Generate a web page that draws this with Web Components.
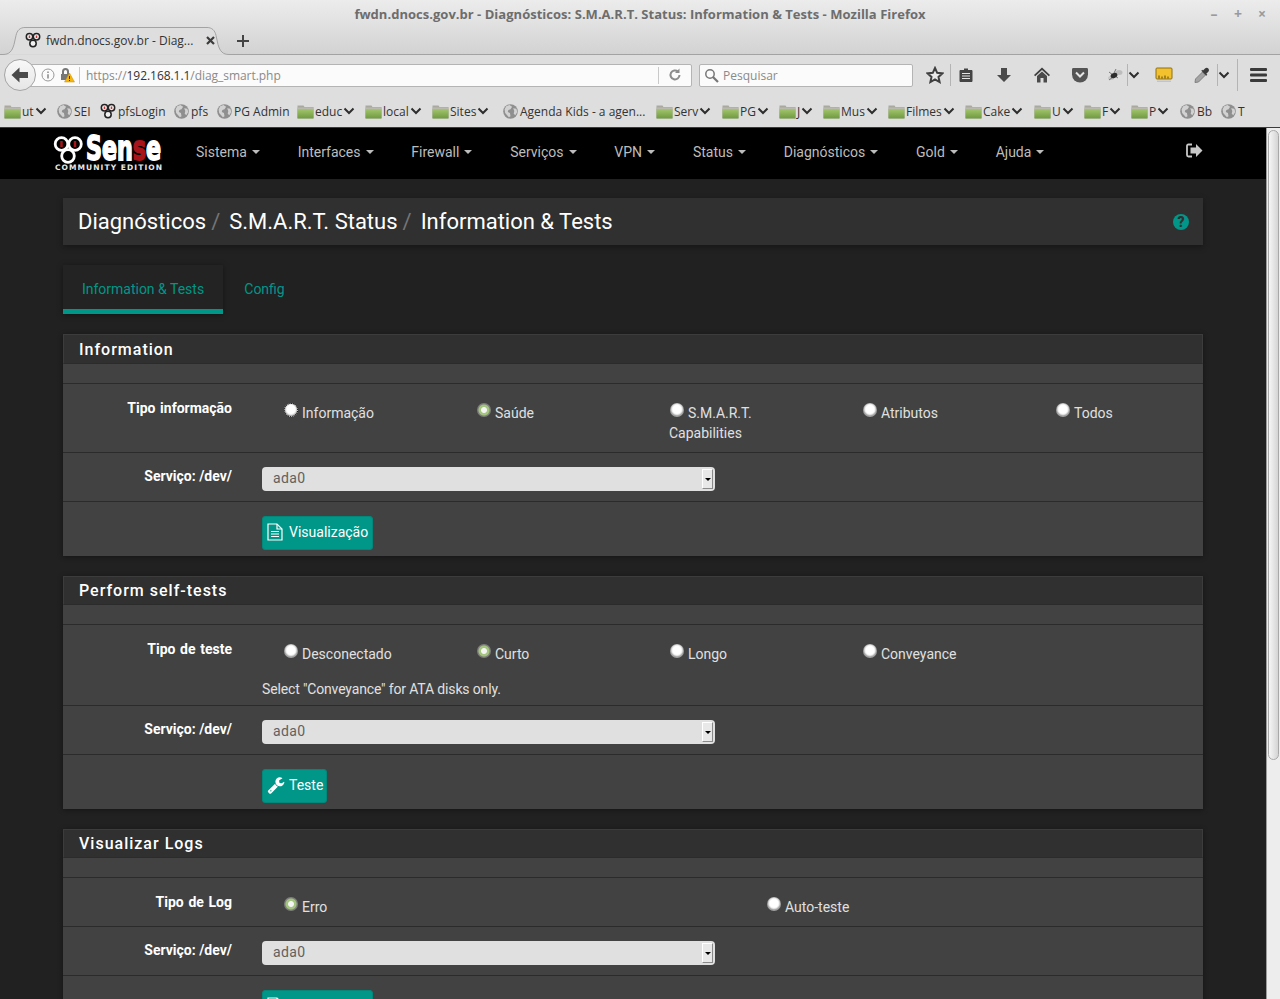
<!DOCTYPE html>
<html>
<head>
<meta charset="utf-8">
<title>pfSense</title>
<style>
  html, body { margin: 0; padding: 0; height: 999px; overflow: hidden; background: #dedede; }
  body { font-family: "Roboto", "Liberation Sans", sans-serif; font-size: 14px; }
</style>
</head>
<body>
<browser-chrome></browser-chrome>
<page-view>
  <pf-navbar>
    <pf-navitem>Sistema</pf-navitem>
    <pf-navitem>Interfaces</pf-navitem>
    <pf-navitem>Firewall</pf-navitem>
    <pf-navitem>Serviços</pf-navitem>
    <pf-navitem>VPN</pf-navitem>
    <pf-navitem>Status</pf-navitem>
    <pf-navitem>Diagnósticos</pf-navitem>
    <pf-navitem>Gold</pf-navitem>
    <pf-navitem>Ajuda</pf-navitem>
  </pf-navbar>
  <pf-breadcrumb></pf-breadcrumb>
  <pf-tabs></pf-tabs>

  <pf-panel heading="Information" hh="30">
    <pf-row label="Tipo informação" h="69">
      <pf-radio w="193" focus>Informação</pf-radio>
      <pf-radio w="193" checked>Saúde</pf-radio>
      <pf-radio w="193">S.M.A.R.T. Capabilities</pf-radio>
      <pf-radio w="193">Atributos</pf-radio>
      <pf-radio w="193">Todos</pf-radio>
    </pf-row>
    <pf-row label="Serviço: /dev/" h="49" compact><pf-select>ada0</pf-select></pf-row>
    <pf-row h="54" last><pf-button icon="file">Visualização</pf-button></pf-row>
  </pf-panel>

  <pf-panel heading="Perform self-tests" hh="29">
    <pf-row label="Tipo de teste" h="81">
      <pf-radio w="193">Desconectado</pf-radio>
      <pf-radio w="193" checked>Curto</pf-radio>
      <pf-radio w="193">Longo</pf-radio>
      <pf-radio w="193">Conveyance</pf-radio>
      <span slot="help">Select "Conveyance" for ATA disks only.</span>
    </pf-row>
    <pf-row label="Serviço: /dev/" h="49" compact><pf-select>ada0</pf-select></pf-row>
    <pf-row h="54" last><pf-button icon="wrench">Teste</pf-button></pf-row>
  </pf-panel>

  <pf-panel heading="Visualizar Logs" hh="29">
    <pf-row label="Tipo de Log" h="49">
      <pf-radio w="483" checked>Erro</pf-radio>
      <pf-radio w="483">Auto-teste</pf-radio>
    </pf-row>
    <pf-row label="Serviço: /dev/" h="49" compact><pf-select>ada0</pf-select></pf-row>
    <pf-row h="54" last><pf-button icon="file">Visualização</pf-button></pf-row>
  </pf-panel>
</page-view>

<script>
const CHROME_FONT = '"Open Sans", "Noto Sans", sans-serif';

const folderIcon = `<svg width="17" height="15" viewBox="0 0 17 15"><path d="M0.5 1.5h6l1 1.5h9v11h-16z" fill="#a9a99f"/><path d="M0.5 3.5h16v11h-16z" fill="#b9b9ae"/><rect x="0.5" y="5" width="16" height="9.5" fill="url(#fg)"/><defs><linearGradient id="fg" x1="0" y1="0" x2="0" y2="1"><stop offset="0" stop-color="#a3c56e"/><stop offset="1" stop-color="#6f9a40"/></linearGradient></defs></svg>`;
const globeIcon = `<svg width="15" height="15" viewBox="0 0 14 14"><circle cx="7" cy="7" r="6.8" fill="#8f8f8f"/><path d="M3 2l3-1 2.500 1.500-1.500 2.500-2 .5-.5 2 2 1 .5 3-1.500 .8-3.500-3.800-.5-3.500zM9.500 4l3 .5.800 3-1.800 3-1.500-1.500.5-2.500z" fill="#d2d2d2"/></svg>`;
const pfIcon = `<svg width="16" height="16" viewBox="0 0 16 16" fill="none" stroke="#222" stroke-width="1.500"><circle cx="4.500" cy="4.800" r="3.200" fill="#f2f2f2"/><circle cx="11.500" cy="4.800" r="3.200" fill="#f2f2f2"/><circle cx="8" cy="11.500" r="3.200" fill="#f2f2f2"/><path d="M4.500 3.500v2.500" stroke="#c33"/><path d="M11.500 3.500v2.500" stroke="#c33"/></svg>`;
const chevron = `<svg width="12" height="8" viewBox="0 0 12 8" fill="none" stroke="#2e2e2e" stroke-width="2"><path d="M1.500 1.500l4.500 4.500 4.500-4.500"/></svg>`;

class BookmarkItem extends HTMLElement {
  connectedCallback() {
    const kind = this.getAttribute('kind');
    const icon = kind === 'folder' ? folderIcon : kind === 'pf' ? pfIcon : globeIcon;
    const root = this.attachShadow({ mode: 'open' });
    root.innerHTML = `
      <style>
        :host { display: flex; align-items: center; flex: none; width: ${this.getAttribute('w')}px; white-space: nowrap; }
        .i { display: flex; flex: none; margin-right: ${kind === 'folder' ? 1 : 2}px; }
        .c { display: flex; margin-left: 1px; }
      </style>
      <span class="i">${icon}</span><slot></slot>${kind === 'folder' ? `<span class="c">${chevron}</span>` : ''}`;
  }
}
customElements.define('bookmark-item', BookmarkItem);

const BOOKMARKS = [
  ['folder', 'ut', 53], ['globe', 'SEI', 43], ['pf', 'pfsLogin', 74], ['globe', 'pfs', 43], ['globe', 'PG Admin', 80],
  ['folder', 'educ', 68], ['folder', 'local', 67], ['folder', 'Sites', 71], ['globe', 'Agenda Kids - a agen...', 153],
  ['folder', 'Serv', 66], ['folder', 'PG', 57], ['folder', 'J', 44], ['folder', 'Mus', 65], ['folder', 'Filmes', 77],
  ['folder', 'Cake', 69], ['folder', 'U', 50], ['folder', 'F', 47], ['folder', 'P', 49], ['globe', 'Bb', 41], ['globe', 'T', 30],
];

class BrowserChrome extends HTMLElement {
  constructor() {
    super();
    const root = this.attachShadow({ mode: 'open' });
    const items = BOOKMARKS.map(([k, t, w]) => `<bookmark-item kind="${k}" w="${w}">${t}</bookmark-item>`).join('');
    root.innerHTML = `
      <style>
        :host { display: block; height: 128px; font-family: ${CHROME_FONT}; font-size: 12px; color: #3a3a3a; box-sizing: border-box; border-bottom: 1px solid #3c3c3c; background: #dedede; }
        .title { height: 27px; display: flex; align-items: center; justify-content: center; position: relative; font-weight: 700; color: #6d6d6d; font-size: 13px; letter-spacing: .02px; }
        .winbtns { position: absolute; right: 6px; top: 6px; display: flex; color: #9a9a9a; font-size: 14px; line-height: 16px; font-weight: 700; }
        .winbtns span { width: 24px; text-align: center; }
        .top { background: linear-gradient(#ececec, #d2d2d2); height: 55px; }
        .tabs { height: 28px; position: relative; display: flex; }
        .tab { position: relative; width: 232px; height: 28px; flex: none; display: flex; align-items: center; padding: 0 0 2px 25px; box-sizing: border-box; }
        .tab svg.shape { position: absolute; left: 0; top: 0; }
        .tab span { position: relative; display: flex; }
        .tab .tabtext { margin-left: 5px; color: #333; width: 160px; white-space: nowrap; }
        .plus { margin-left: 4px; display: flex; align-items: center; }
        .rule { position: absolute; left: 232px; right: 0; bottom: 0; height: 1px; background: #a3a3a3; }
        .nav { height: 40px; display: flex; align-items: center; position: relative; padding-left: 20px; }
        .back { position: absolute; left: 4px; top: 4px; width: 32px; height: 32px; border-radius: 50%; background: linear-gradient(#f8f8f8, #e6e6e6); border: 1px solid #a5a5a5; box-sizing: border-box; display: flex; align-items: center; justify-content: center; z-index: 1; }
        .url { width: 672px; height: 23px; box-sizing: border-box; background: #fbfbfb; border: 1px solid #b4b4b4; border-radius: 2px; display: flex; align-items: center; padding-left: 20px; font-size: 12px; color: #8a8a8a; position: relative; }
        .url b { font-weight: 400; color: #333; }
        .sep { width: 1px; height: 17px; background: #c9c9c9; flex: none; }
        .icons .sep { background: #b4b4b4; }
        .search { width: 214px; height: 23px; box-sizing: border-box; margin-left: 7px; background: #fbfbfb; border: 1px solid #b4b4b4; border-radius: 2px; display: flex; align-items: center; padding-left: 4px; gap: 4px; color: #8a8a8a; }
        .icons { display: flex; align-items: center; margin-left: 13px; }
        .icons > * { flex: none; }
        .marks { height: 32px; display: flex; align-items: center; padding-left: 4px; color: #333; }
      </style>
      <div class="top">
        <div class="title">fwdn.dnocs.gov.br - Diagnósticos: S.M.A.R.T. Status: Information &amp; Tests - Mozilla Firefox
          <div class="winbtns"><span>–</span><span>+</span><span>×</span></div>
        </div>
        <div class="tabs">
          <div class="tab">
            <svg class="shape" width="232" height="28" viewBox="0 0 232 28"><path d="M0 27.500h3c6 0 9-3 11-10l2-9c1-5 4-8 9-8h182c5 0 8 3 9 8l2 9c2 7 5 10 11 10h3" fill="#dedede" stroke="#a3a3a3"/></svg>
            <span>${pfIcon}</span><span class="tabtext">fwdn.dnocs.gov.br - Diag...</span>
            <svg style="position:relative" width="9" height="9" viewBox="0 0 9 9" stroke="#3c3c3c" stroke-width="2.200"><path d="M1 1l7 7M8 1l-7 7"/></svg>
          </div>
          <div class="plus"><svg width="14" height="14" viewBox="0 0 14 14" fill="none" stroke="#444" stroke-width="2"><path d="M7 1v12M1 7h12"/></svg></div>
          <div class="rule"></div>
        </div>
      </div>
      <div class="nav">
        <div class="back"><svg width="18" height="16" viewBox="0 0 18 16"><path d="M8.500 0.500l-8 7.500 8 7.500v-4.500h8.500v-6h-8.500z" fill="#4a4a4a"/></svg></div>
        <div class="url">
          <svg width="14" height="14" viewBox="0 0 14 14" style="flex:none"><circle cx="7" cy="7" r="6" fill="none" stroke="#999"/><path d="M7 3.500v1.500M7 6.200v4.300" stroke="#888" stroke-width="1.500"/></svg>
          <svg width="16" height="16" viewBox="0 0 16 16" style="margin-left:4px;flex:none"><path d="M3 7v-2.500a3.500 3.500 0 0 1 7 0v2.500h1v6h-9v-6zM5 7h3v-2.500a1.500 1.500 0 0 0-3 0z" fill="#777"/><path d="M10.500 6l5 9h-10z" fill="#f5b50f" stroke="#c98f00" stroke-width=".5"/><path d="M10.500 9v3M10.500 13v1" stroke="#333"/></svg>
          <span class="sep" style="margin:0 6px 0 4px"></span>
          <span style="width:572px;white-space:nowrap;flex:none;letter-spacing:-.05px">https://<b>192.168.1.1</b>/diag_smart.php</span>
          <span class="sep"></span>
          <svg width="14" height="14" viewBox="0 0 14 14" style="margin-left:9px;flex:none" fill="none" stroke="#8c8c8c" stroke-width="2"><path d="M11.500 7a4.500 4.500 0 1 1-1.500-3.400"/><path d="M11.500 0.500v4.500h-4.500" fill="#8c8c8c" stroke="none"/></svg>
        </div>
        <div class="search">
          <svg width="15" height="15" viewBox="0 0 15 15" fill="none" stroke="#777" stroke-width="1.500"><circle cx="6" cy="6" r="4.200"/><path d="M9 9l5 5" stroke-width="2.200"/></svg>
          <span>Pesquisar</span>
        </div>
        <div class="icons">
          <svg width="18" height="18" viewBox="0 0 18 18" fill="#e8e8e8" stroke="#3f3f3f" stroke-width="2"><path d="M9 2l2.200 4.800 5.200.6-3.900 3.500 1.100 5.100-4.600-2.600-4.600 2.600 1.100-5.100-3.900-3.500 5.200-.6z"/></svg>
          <span class="sep" style="margin-left:6px;height:22px"></span>
          <svg width="16" height="16" viewBox="0 0 16 16" style="margin-left:7px"><path d="M2.500 3h3.500v-1.500h4v1.500h3.500c.5 0 1 .5 1 1v10c0 .5-.5 1-1 1h-11c-.5 0-1-.5-1-1v-10c0-.5.5-1 1-1z" fill="#444"/><path d="M4 6.500h8M4 9h8M4 11.500h8" stroke="#e4e4e4" stroke-width="1"/></svg>
          <svg width="16" height="16" viewBox="0 0 16 16" style="margin-left:22px"><path d="M5 1h6v7h4l-7 7-7-7h4z" fill="#4a4a4a"/></svg>
          <svg width="18" height="16" viewBox="0 0 18 16" style="margin-left:21px"><path d="M9 0.500l8 7.500-1.200 1.300-6.800-6.300-6.800 6.300-1.200-1.300z" fill="#3f3f3f"/><path d="M9 4.500l5 4.500v6.500h-3.500v-4.500h-3v4.500h-3.500v-6.500z" fill="#4a4a4a"/></svg>
          <svg width="18" height="16" viewBox="0 0 18 16" style="margin-left:20px"><path d="M2.500 1h13c1 0 1.500 .5 1.500 1.500v5a8 8 0 0 1-16 0v-5c0-1 .5-1.500 1.500-1.500z" fill="#555"/><path d="M5 5.500l4 4 4-4" fill="none" stroke="#e6e6e6" stroke-width="2"/></svg>
          <svg width="16" height="16" viewBox="0 0 16 16" style="margin-left:18px"><ellipse cx="12" cy="5.500" rx="3.500" ry="2.500" fill="#bdbdbd"/><ellipse cx="4" cy="11" rx="3" ry="2" fill="#c6c6c6"/><path d="M2 5l4 3M9 2l-2 4M2 13l4-3M11 11l-3-2" stroke="#777"/><ellipse cx="7" cy="8.500" rx="3.500" ry="2.500" fill="#2c2c2c" transform="rotate(-25 7 8.500)"/></svg>
          <span class="sep" style="margin-left:4px;height:22px"></span>
          <span style="display:flex">${chevron}</span>
          <svg width="18" height="18" viewBox="0 0 18 18" style="margin-left:15px"><rect x="1" y="2" width="16" height="11" rx="1" fill="#f3c12e" stroke="#8f7010"/><path d="M4 12.500v-3M7 12.500v-2M10 12.500v-3M13 12.500v-2" stroke="#554410"/><rect x="2" y="14.500" width="14" height="1.500" fill="#c4c4c4"/></svg>
          <svg width="18" height="18" viewBox="0 0 18 18" style="margin-left:20px"><path d="M2.500 13l7-7 3 3-7 7-3.500 .5z" fill="#a4a4a4" stroke="#808080"/><path d="M10 4.500l2-2c1-1 2.500-1 3.300 0s1 2.300 0 3.300l-2 2 1 1-1 1-5-5 1-1z" fill="#3a3a3a"/></svg>
          <span class="sep" style="margin-left:6px;height:22px"></span>
          <span style="display:flex">${chevron}</span>
          <span class="sep" style="margin-left:7px;height:32px"></span>
          <svg width="18" height="14" viewBox="0 0 18 14" style="margin-left:12px" fill="#3a3a3a"><rect y="0" width="17" height="3" rx="1"/><rect y="5.500" width="17" height="3" rx="1"/><rect y="11" width="17" height="3" rx="1"/></svg>
        </div>
      </div>
      <div class="marks">${items}</div>`;
  }
}
customElements.define('browser-chrome', BrowserChrome);

class PageView extends HTMLElement {
  constructor() {
    super();
    this.attachShadow({ mode: 'open' }).innerHTML = `
      <style>
        :host { display: flex; height: 871px; overflow: hidden; background: #212121; color: #e0e0e0; }
        .main { width: 1266px; flex: none; height: 871px; overflow: hidden; }
        .bar { flex: 1; background: #ededed; border-left: 1px solid #9c9c9c; padding: 2px 1px 0 1px; }
        .thumb { height: 630px; border-radius: 6px; background: linear-gradient(90deg, #f6f6f6, #d4d4d4); border: 1px solid #a8a8a8; box-sizing: border-box; }
      </style>
      <div class="main"><slot></slot></div>
      <div class="bar"><div class="thumb"></div></div>`;
  }
}
customElements.define('page-view', PageView);

class PfNavbar extends HTMLElement {
  constructor() {
    super();
    this.attachShadow({ mode: 'open' }).innerHTML = `
      <style>
        :host { display: flex; align-items: center; box-sizing: border-box; height: 51px; background: #000; position: relative; padding: 0 0 3px 53px; }
        .logo { display: block; flex: none; align-self: flex-start; margin: 2px 18px 0 0; }
        .logout { position: absolute; right: 63px; top: 15px; }
      </style>
      <svg class="logo" width="110" height="46" viewBox="0 0 110 46">
        <g fill="#000" stroke="#fff" stroke-width="2.800">
          <circle cx="8.500" cy="14" r="6.300"/><circle cx="22" cy="14" r="6.300"/><circle cx="15" cy="26" r="6.300"/>
        </g>
        <path d="M8.500 11v6M22 11v6" stroke="#a8141a" stroke-width="2.500"/>
        <text y="30" x="33" textLength="75" lengthAdjust="spacingAndGlyphs" font-family="DejaVu Sans" font-weight="700" font-size="33" fill="#fff" stroke="#fff" stroke-width="1.800">Sen<tspan fill="#a8141a" stroke="#a8141a">s</tspan>e</text>
        <text y="40" x="2" textLength="107" lengthAdjust="spacing" font-family="DejaVu Sans" font-weight="700" font-size="7.500" fill="#e8e8e8">COMMUNITY EDITION</text>
      </svg>
      <slot></slot>
      <svg class="logout" width="17" height="15" viewBox="0 0 17 15"><path d="M6 1.500h-3.500c-1 0-1.500 .5-1.500 1.500v9c0 1 .5 1.500 1.500 1.500h3.500" fill="none" stroke="#c8c8c8" stroke-width="1.800"/><path d="M10 1l6.500 6.500-6.500 6.500v-3.500h-5.500v-6h5.500z" fill="#c8c8c8"/></svg>`;
  }
}
customElements.define('pf-navbar', PfNavbar);

class PfNavitem extends HTMLElement {
  constructor() {
    super();
    this.attachShadow({ mode: 'open' }).innerHTML = `
      <style>
        :host { display: inline-flex; align-items: center; padding: 0 10px 0 15px; color: #bdbdbd; font-size: 14px; white-space: nowrap; }
        .caret { width: 0; height: 0; margin-left: 5px; border-top: 4px solid #bdbdbd; border-left: 4px solid transparent; border-right: 4px solid transparent; }
        .gap { width: 12.8px; }
      </style>
      <slot></slot><span class="caret"></span><span class="gap"></span>`;
  }
}
customElements.define('pf-navitem', PfNavitem);

class PfBreadcrumb extends HTMLElement {
  constructor() {
    super();
    this.attachShadow({ mode: 'open' }).innerHTML = `
      <style>
        :host { display: flex; align-items: center; height: 47px; margin: 19px 63px 0; padding: 0 14px 0 15px; background: #303030; box-shadow: 0 2px 6px rgba(0,0,0,.35); font-size: 22px; color: #fff; }
        i { font-style: normal; color: #757575; margin: 0 9px 0 5px; }
        .sp { flex: 1; }
        .help { width: 16px; height: 16px; border-radius: 50%; background: #009688; color: #303030; font-size: 14px; font-weight: 900; line-height: 16px; text-align: center; }
      </style>
      <span>Diagnósticos</span><i>/</i><span>S.M.A.R.T. Status</span><i>/</i><span>Information &amp; Tests</span>
      <span class="sp"></span><span class="help">?</span>`;
  }
}
customElements.define('pf-breadcrumb', PfBreadcrumb);

class PfTabs extends HTMLElement {
  constructor() {
    super();
    this.attachShadow({ mode: 'open' }).innerHTML = `
      <style>
        :host { display: flex; height: 49px; margin: 20px 63px 0; color: #009688; font-size: 14px; }
        a { display: flex; align-items: center; justify-content: center; box-sizing: border-box; height: 49px; }
        .on { width: 160px; padding-top: 3px; background: #232323; border-bottom: 5px solid #009688; box-shadow: 0 1px 6px rgba(0,0,0,.4); }
        .off { width: 83px; padding-bottom: 2px; }
      </style>
      <a class="on">Information &amp; Tests</a><a class="off">Config</a>`;
  }
}
customElements.define('pf-tabs', PfTabs);

class PfPanel extends HTMLElement {
  constructor() {
    super();
    const hh = this.getAttribute('hh');
    this.attachShadow({ mode: 'open' }).innerHTML = `
      <style>
        :host { display: block; margin: 20px 63px 0; background: #424242; box-shadow: 0 1px 5px rgba(0,0,0,.4); }
        h2 { margin: 0; height: ${hh}px; box-sizing: border-box; padding-left: 15px; background: #303030; border: 1px solid #3c3c3c; border-bottom: 1px solid #2b2b2b; font-size: 16px; font-weight: 500; letter-spacing: 1px; line-height: ${hh - 1}px; color: #fff; }
        .blank { height: 20px; box-sizing: border-box; border-bottom: 1px solid #2b2b2b; }
      </style>
      <h2></h2><div class="blank"></div><slot></slot>`;
    this.shadowRoot.querySelector('h2').textContent = this.getAttribute('heading');
  }
}
customElements.define('pf-panel', PfPanel);

class PfRow extends HTMLElement {
  constructor() {
    super();
    const last = this.hasAttribute('last');
    const compact = this.hasAttribute('compact');
    this.attachShadow({ mode: 'open' }).innerHTML = `
      <style>
        :host { display: flex; box-sizing: border-box; height: ${this.getAttribute('h')}px; padding-top: 14px; ${last ? '' : 'border-bottom: 1px solid #2b2b2b;'} }
        .label { width: 169px; flex: none; text-align: right; font-weight: 700; color: #fff; font-size: 14px; line-height: 20px; ${compact ? 'margin-top: -1px;' : 'word-spacing: 1.2px;'} }
        .value { margin-left: 30px; flex: 1; min-width: 0; display: flex; flex-direction: column; }
        .line { display: flex; }
        ::slotted([slot=help]) { display: block; margin-top: 15px; color: #e0e0e0; font-size: 14px; line-height: 20px; letter-spacing: -.15px; }
      </style>
      <div class="label"></div>
      <div class="value"><div class="line"><slot></slot></div><slot name="help"></slot></div>`;
    this.shadowRoot.querySelector('.label').textContent = this.getAttribute('label') || '';
  }
}
customElements.define('pf-row', PfRow);

class PfRadio extends HTMLElement {
  constructor() {
    super();
    const on = this.hasAttribute('checked');
    const focus = this.hasAttribute('focus');
    this.attachShadow({ mode: 'open' }).innerHTML = `
      <style>
        :host { display: block; box-sizing: border-box; width: ${this.getAttribute('w')}px; flex: none; margin-top: 5px; color: #e0e0e0; font-size: 14px; line-height: 20px; text-indent: 19px; padding: 0 30px 0 21px; position: relative; }
        .dot { position: absolute; left: 22px; top: 0; width: 14px; height: 14px; box-sizing: border-box; border-radius: 50%; ${focus ? 'border: 1px dotted #111;' : ''}
          background: ${on ? 'radial-gradient(circle, #f4f4f4 0 2.500px, #a3c57d 3.500px 5px, #7d7d7d 6px 7px)' : 'radial-gradient(circle at 50% 45%, #fff 0 4px, #ececec 5px, #a0a0a0 6.500px)'}; }
      </style>
      <span class="dot"></span><slot></slot>`;
  }
}
customElements.define('pf-radio', PfRadio);

class PfSelect extends HTMLElement {
  constructor() {
    super();
    this.attachShadow({ mode: 'open' }).innerHTML = `
      <style>
        :host { display: flex; align-items: center; box-sizing: border-box; width: 453px; height: 24px; background: #e0e0e0; border-radius: 4px; padding: 0 0 2px 11px; color: #616161; font-size: 14px; letter-spacing: .4px; position: relative; }
        .btn { position: absolute; right: 2px; top: 2px; width: 11px; height: 20px; box-sizing: border-box; background: #e8e8e8; border: 1px solid #8a8a8a; border-top-color: #fff; border-left-color: #fff; display: flex; align-items: center; justify-content: center; }
        .btn::after { content: ""; border-top: 3px solid #000; border-left: 3px solid transparent; border-right: 3px solid transparent; }
      </style>
      <slot></slot><span class="btn"></span>`;
  }
}
customElements.define('pf-select', PfSelect);

const BTN_ICONS = {
  file: { pad: 4, gap: 6, svg: `<svg width="16" height="18" viewBox="0 0 16 18" fill="none" stroke="#fff" stroke-width="1.200"><path d="M1 1h9l5 5v11h-14z"/><path d="M10 1v5h5"/><path d="M4 8.500h8M4 11h8M4 13.500h8"/></svg>` },
  wrench: { pad: 3, gap: 4, svg: `<svg width="18" height="18" viewBox="0 0 1792 1792"><path fill="#fff" d="M448 1472q0-26-19-45t-45-19-45 19-19 45 19 45 45 19 45-19 19-45zm644-420l-682 682q-37 37-90 37-52 0-91-37l-106-108q-38-36-38-90 0-53 38-91l681-681q39 98 114.500 173.500t173.500 114.500zm634-435q0 39-23 106-47 134-164.500 217.500t-258.500 83.500q-185 0-316.500-131.500t-131.500-316.500 131.500-316.500 316.500-131.500q58 0 121.500 16.500t107.500 46.500q16 11 16 28t-16 28l-293 169v224l193 107q5-3 79-48.500t135.500-81 70.500-35.500q15 0 23.500 10t8.500 25z"/></svg>` },
};

class PfButton extends HTMLElement {
  constructor() {
    super();
    const icon = BTN_ICONS[this.getAttribute('icon')];
    this.attachShadow({ mode: 'open' }).innerHTML = `
      <style>
        :host { display: inline-flex; align-items: center; gap: ${icon.gap}px; box-sizing: border-box; height: 34px; padding: 0 ${icon.pad}px 2px 4px; background: #009688; border: 1px solid #00897b; border-radius: 3px; color: #fff; font-size: 14px; }
        svg { display: block; flex: none; }
      </style>
      ${icon.svg}<slot></slot>`;
  }
}
customElements.define('pf-button', PfButton);
</script>
</body>
</html>
